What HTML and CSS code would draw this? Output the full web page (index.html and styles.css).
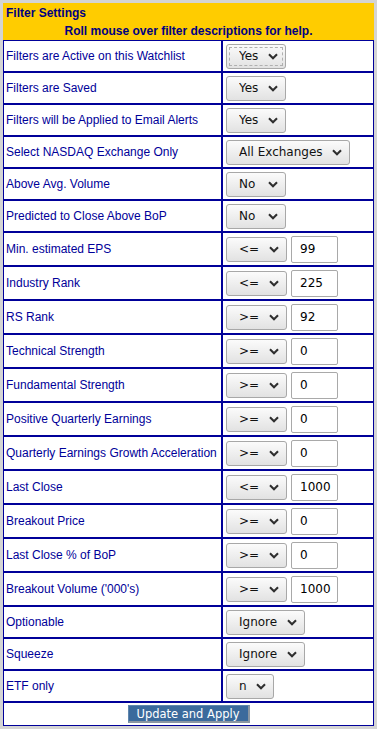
FILE: index.html
```html
<!DOCTYPE html>
<html lang="en">
<head>
<meta charset="utf-8">
<title>Filter Settings</title>
<link rel="stylesheet" href="styles.css">
</head>
<body>
<form class="panel">
<table class="filters">
  <colgroup><col class="c-label"><col class="c-value"></colgroup>
  <tr class="head"><td colspan="2" class="title">Filter Settings</td></tr>
  <tr class="head"><td colspan="2" class="hint">Roll mouse over filter descriptions for help.</td></tr>

  <tr class="row sel"><td class="lbl">Filters are Active on this Watchlist</td>
    <td class="val"><div class="ctl"><select class="dd is-focus"><option>Yes</option><option>No</option></select></div></td></tr>
  <tr class="row sel"><td class="lbl">Filters are Saved</td>
    <td class="val"><div class="ctl"><select class="dd"><option>Yes</option><option>No</option></select></div></td></tr>
  <tr class="row sel"><td class="lbl">Filters will be Applied to Email Alerts</td>
    <td class="val"><div class="ctl"><select class="dd"><option>Yes</option><option>No</option></select></div></td></tr>
  <tr class="row sel"><td class="lbl">Select NASDAQ Exchange Only</td>
    <td class="val"><div class="ctl"><select class="dd"><option>All Exchanges</option><option>NASDAQ</option></select></div></td></tr>
  <tr class="row sel"><td class="lbl">Above Avg. Volume</td>
    <td class="val"><div class="ctl"><select class="dd"><option>No</option><option>Yes</option></select></div></td></tr>
  <tr class="row sel"><td class="lbl">Predicted to Close Above BoP</td>
    <td class="val"><div class="ctl"><select class="dd"><option>No</option><option>Yes</option></select></div></td></tr>

  <tr class="row inp"><td class="lbl">Min. estimated EPS</td>
    <td class="val"><div class="ctl"><select class="dd"><option>&lt;=</option><option>&gt;=</option></select><input class="num" type="text" value="99"></div></td></tr>
  <tr class="row inp"><td class="lbl">Industry Rank</td>
    <td class="val"><div class="ctl"><select class="dd"><option>&lt;=</option><option>&gt;=</option></select><input class="num" type="text" value="225"></div></td></tr>
  <tr class="row inp"><td class="lbl">RS Rank</td>
    <td class="val"><div class="ctl"><select class="dd"><option>&gt;=</option><option>&lt;=</option></select><input class="num" type="text" value="92"></div></td></tr>
  <tr class="row inp"><td class="lbl">Technical Strength</td>
    <td class="val"><div class="ctl"><select class="dd"><option>&gt;=</option><option>&lt;=</option></select><input class="num" type="text" value="0"></div></td></tr>
  <tr class="row inp"><td class="lbl">Fundamental Strength</td>
    <td class="val"><div class="ctl"><select class="dd"><option>&gt;=</option><option>&lt;=</option></select><input class="num" type="text" value="0"></div></td></tr>
  <tr class="row inp"><td class="lbl">Positive Quarterly Earnings</td>
    <td class="val"><div class="ctl"><select class="dd"><option>&gt;=</option><option>&lt;=</option></select><input class="num" type="text" value="0"></div></td></tr>
  <tr class="row inp"><td class="lbl">Quarterly Earnings Growth Acceleration</td>
    <td class="val"><div class="ctl"><select class="dd"><option>&gt;=</option><option>&lt;=</option></select><input class="num" type="text" value="0"></div></td></tr>
  <tr class="row inp"><td class="lbl">Last Close</td>
    <td class="val"><div class="ctl"><select class="dd"><option>&lt;=</option><option>&gt;=</option></select><input class="num" type="text" value="1000"></div></td></tr>
  <tr class="row inp"><td class="lbl">Breakout Price</td>
    <td class="val"><div class="ctl"><select class="dd"><option>&gt;=</option><option>&lt;=</option></select><input class="num" type="text" value="0"></div></td></tr>
  <tr class="row inp"><td class="lbl">Last Close % of BoP</td>
    <td class="val"><div class="ctl"><select class="dd"><option>&gt;=</option><option>&lt;=</option></select><input class="num" type="text" value="0"></div></td></tr>
  <tr class="row inp"><td class="lbl">Breakout Volume ('000's)</td>
    <td class="val"><div class="ctl"><select class="dd"><option>&gt;=</option><option>&lt;=</option></select><input class="num" type="text" value="1000"></div></td></tr>

  <tr class="row sel"><td class="lbl">Optionable</td>
    <td class="val"><div class="ctl"><select class="dd"><option>Ignore</option><option>Yes</option><option>No</option></select></div></td></tr>
  <tr class="row sel"><td class="lbl">Squeeze</td>
    <td class="val"><div class="ctl"><select class="dd"><option>Ignore</option><option>Yes</option><option>No</option></select></div></td></tr>
  <tr class="row sel"><td class="lbl">ETF only</td>
    <td class="val"><div class="ctl"><select class="dd"><option>n</option><option>y</option></select></div></td></tr>

  <tr class="row foot"><td colspan="2" class="actions"><button type="button" class="apply">Update and Apply</button></td></tr>
</table>
</form>
</body>
</html>
```
FILE: styles.css
```css
html, body {
  margin: 0;
  background: #d4d4d4;
}

body {
  padding: 3px;
}

.panel {
  margin: 0;
}

.filters {
  border-collapse: separate;
  border-spacing: 0;
  table-layout: fixed;
  width: 371px;
  background: #ffffff;
  font-family: "Liberation Sans", Arial, sans-serif;
  font-size: 12px;
}

.c-label { width: 219px; }
.c-value { width: 152px; }

.head td {
  background: #ffcc00;
  color: #000080;
  font-weight: bold;
  font-size: 12px;
  padding: 0 3px;
  border: 0;
}

.head .title {
  height: 18px;
  line-height: 18px;
  padding-top: 1px;
}

.head .hint {
  height: 18px;
  line-height: 18px;
  text-align: center;
}

.row td {
  border: 1px solid #000099;
  padding: 0;
  vertical-align: middle;
}

.row.sel td { height: 30px; }
.row.inp td { height: 32px; }

.lbl {
  color: #000099;
  padding-left: 2px !important;
  white-space: nowrap;
  overflow: hidden;
}

.val {
  padding-left: 3px !important;
}

.ctl {
  display: flex;
  align-items: center;
  gap: 4px;
}

.dd {
  -webkit-appearance: none;
  appearance: none;
  box-sizing: border-box;
  height: 25px;
  margin: 0;
  padding: 0 26px 0 12px;
  font-family: "DejaVu Sans", Verdana, sans-serif;
  font-size: 12px;
  color: #111;
  border: 1px solid #a8a8a8;
  border-radius: 3px;
  background-color: #ececec;
  background-image:
    url("data:image/svg+xml,%3Csvg xmlns='http://www.w3.org/2000/svg' width='10' height='7' viewBox='0 0 10 7'%3E%3Cpath d='M1 1.2l4 4 4-4' fill='none' stroke='%23303030' stroke-width='2.1'/%3E%3C/svg%3E"),
    linear-gradient(#fbfbfb, #e2e2e2);
  background-repeat: no-repeat, no-repeat;
  background-position: right 7px center, 0 0;
  background-size: 10px 7px, 100% 100%;
}

.dd.is-focus {
  outline: 1px dashed #b0b0b0;
  outline-offset: -4px;
}

.num {
  box-sizing: border-box;
  width: 47px;
  height: 27px;
  margin: 0;
  padding: 0 0 0 8px;
  font-family: "DejaVu Sans", Verdana, sans-serif;
  font-size: 12px;
  color: #000;
  background: #fff;
  border: 1px solid #a9a9a9;
  border-radius: 2px;
}

.actions {
  text-align: center;
  padding: 2px 0 !important;
  height: 18px;
}

.apply {
  display: inline-block;
  vertical-align: middle;
  box-sizing: border-box;
  width: 122px;
  height: 18px;
  margin: 0;
  padding: 0;
  font-family: "DejaVu Sans", Verdana, sans-serif;
  font-size: 11.5px;
  line-height: 16px;
  color: #ffffff;
  background: #3b6a9c;
  border: 1px solid;
  border-color: #5f86ad #8a96a2 #8a96a2 #5f86ad;
  border-right-width: 2px;
  border-bottom-width: 2px;
}
```
